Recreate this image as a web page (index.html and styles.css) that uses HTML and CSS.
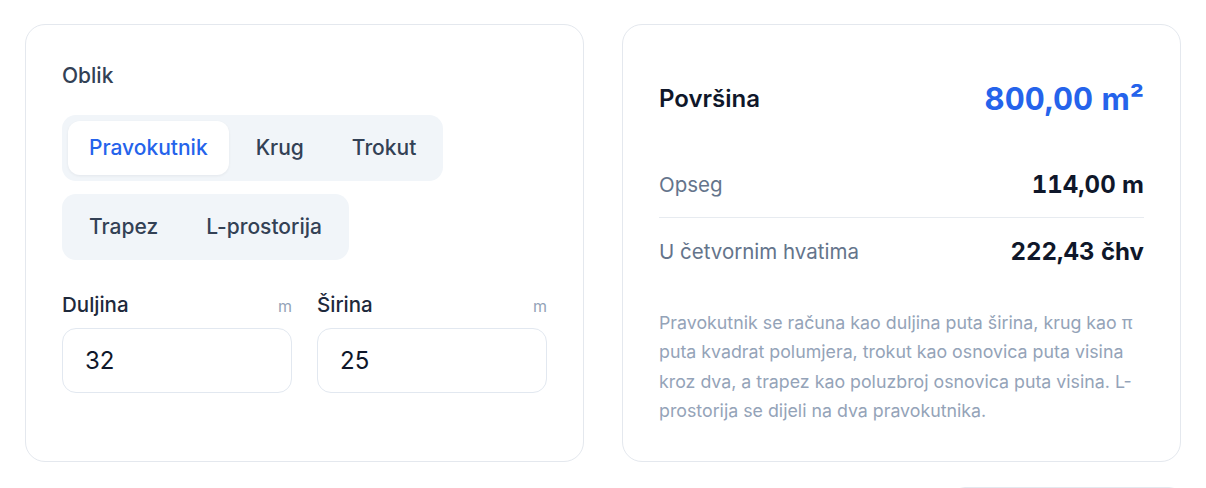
FILE: index.html
```html
<!DOCTYPE html>
<html lang="hr">
<head>
    <meta charset="UTF-8" />
    <meta name="viewport" content="width=device-width, initial-scale=1.0" />
    <title>Kalkulator površine</title>
    <link rel="stylesheet" href="styles.css">
</head>
<body>
    <div class="calc">
        <div class="card form-card">
            <div class="label">Oblik</div>
            <div class="shapes">
                <div class="segment">
                    <button class="seg-btn active">Pravokutnik</button>
                    <button class="seg-btn">Krug</button>
                    <button class="seg-btn">Trokut</button>
                </div>
                <div class="segment">
                    <button class="seg-btn">Trapez</button>
                    <button class="seg-btn">L-prostorija</button>
                </div>
            </div>
            <div class="fields">
                <div class="field">
                    <div class="field-head">
                        <span class="field-name">Duljina</span>
                        <span class="unit">m</span>
                    </div>
                    <input class="input" type="text" value="32" />
                </div>
                <div class="field">
                    <div class="field-head">
                        <span class="field-name">Širina</span>
                        <span class="unit">m</span>
                    </div>
                    <input class="input" type="text" value="25" />
                </div>
            </div>
        </div>

        <div class="card result-card">
            <div class="result-main">
                <span class="result-title">Površina</span>
                <span class="result-big">800,00 m²</span>
            </div>
            <div class="row">
                <span class="row-name">Opseg</span>
                <span class="row-value">114,00 m</span>
            </div>
            <div class="row">
                <span class="row-name">U četvornim hvatima</span>
                <span class="row-value">222,43 čhv</span>
            </div>
            <p class="note">
                Pravokutnik se računa kao duljina puta širina, krug kao π puta kvadrat polumjera, trokut kao osnovica puta visina kroz dva, a trapez kao poluzbroj osnovica puta visina. L-prostorija se dijeli na dva pravokutnika.
            </p>
        </div>
    </div>
    <div class="actions">
        <div class="next-box"></div>
    </div>
</body>
</html>
```

FILE: styles.css
```css
body {
    font-family: 'Inter', 'Noto Sans', sans-serif;
    background: #fff;
    color: #0f172a;
    margin: 0;
    padding: 24px 25px 0;
}

.calc {
    display: grid;
    grid-template-columns: 1fr 1fr;
    gap: 38px;
}

.card {
    border: 1px solid #e4e8ee;
    border-radius: 20px;
    padding: 36px;
    background: #fff;
}

.label {
    font-size: 21px;
    line-height: 30px;
    font-weight: 500;
    color: #334155;
    margin-bottom: 24px;
}

.shapes {
    display: flex;
    flex-direction: column;
    align-items: flex-start;
    gap: 13px;
}

.segment {
    display: flex;
    gap: 6px;
    padding: 6px;
    background: #f1f5f9;
    border-radius: 14px;
}

.seg-btn {
    font-family: inherit;
    font-size: 21px;
    line-height: 24px;
    font-weight: 500;
    color: #334155;
    background: transparent;
    border: 0;
    border-radius: 12px;
    padding: 15px 21px;
}

.seg-btn.active {
    background: #fff;
    color: #2563eb;
    box-shadow: 0 1px 3px rgba(15, 23, 42, 0.06);
}

.fields {
    display: grid;
    grid-template-columns: 1fr 1fr;
    gap: 25px;
    margin-top: 31px;
}

.field-head {
    display: flex;
    justify-content: space-between;
    align-items: baseline;
    margin-bottom: 10px;
}

.field-name {
    font-size: 20.5px;
    line-height: 27px;
    font-weight: 500;
    color: #1e293b;
}

.unit {
    font-size: 16px;
    color: #94a3b8;
}

.input {
    box-sizing: border-box;
    width: 100%;
    height: 65px;
    border: 1.5px solid #e2e8f0;
    border-radius: 14px;
    padding: 0 22px;
    font-family: inherit;
    font-size: 24px;
    color: #0f172a;
    outline: none;
}

.result-main {
    display: flex;
    justify-content: space-between;
    align-items: center;
    height: 74px;
    margin-bottom: 16px;
}

.result-title {
    font-size: 24px;
    font-weight: 600;
    color: #0f172a;
}

.result-big {
    font-size: 31px;
    font-weight: 700;
    color: #2563eb;
    font-variant-numeric: tabular-nums;
}

.row {
    display: flex;
    justify-content: space-between;
    align-items: center;
    height: 66px;
}

.row + .row {
    border-top: 1px solid #e7ebf0;
}

.row-name {
    font-size: 20.5px;
    color: #64748b;
}

.row-value {
    font-size: 24px;
    font-weight: 700;
    color: #0f172a;
    font-variant-numeric: tabular-nums;
}

.note {
    margin: 24px 0 0;
    font-size: 17.8px;
    line-height: 29.3px;
    color: #94a3b8;
}

.actions {
    display: flex;
    justify-content: flex-end;
    margin-top: 25px;
}

.next-box {
    width: 226px;
    height: 48px;
    border: 1px solid #e4e8ee;
    border-radius: 12px;
    background: #fff;
}
```
